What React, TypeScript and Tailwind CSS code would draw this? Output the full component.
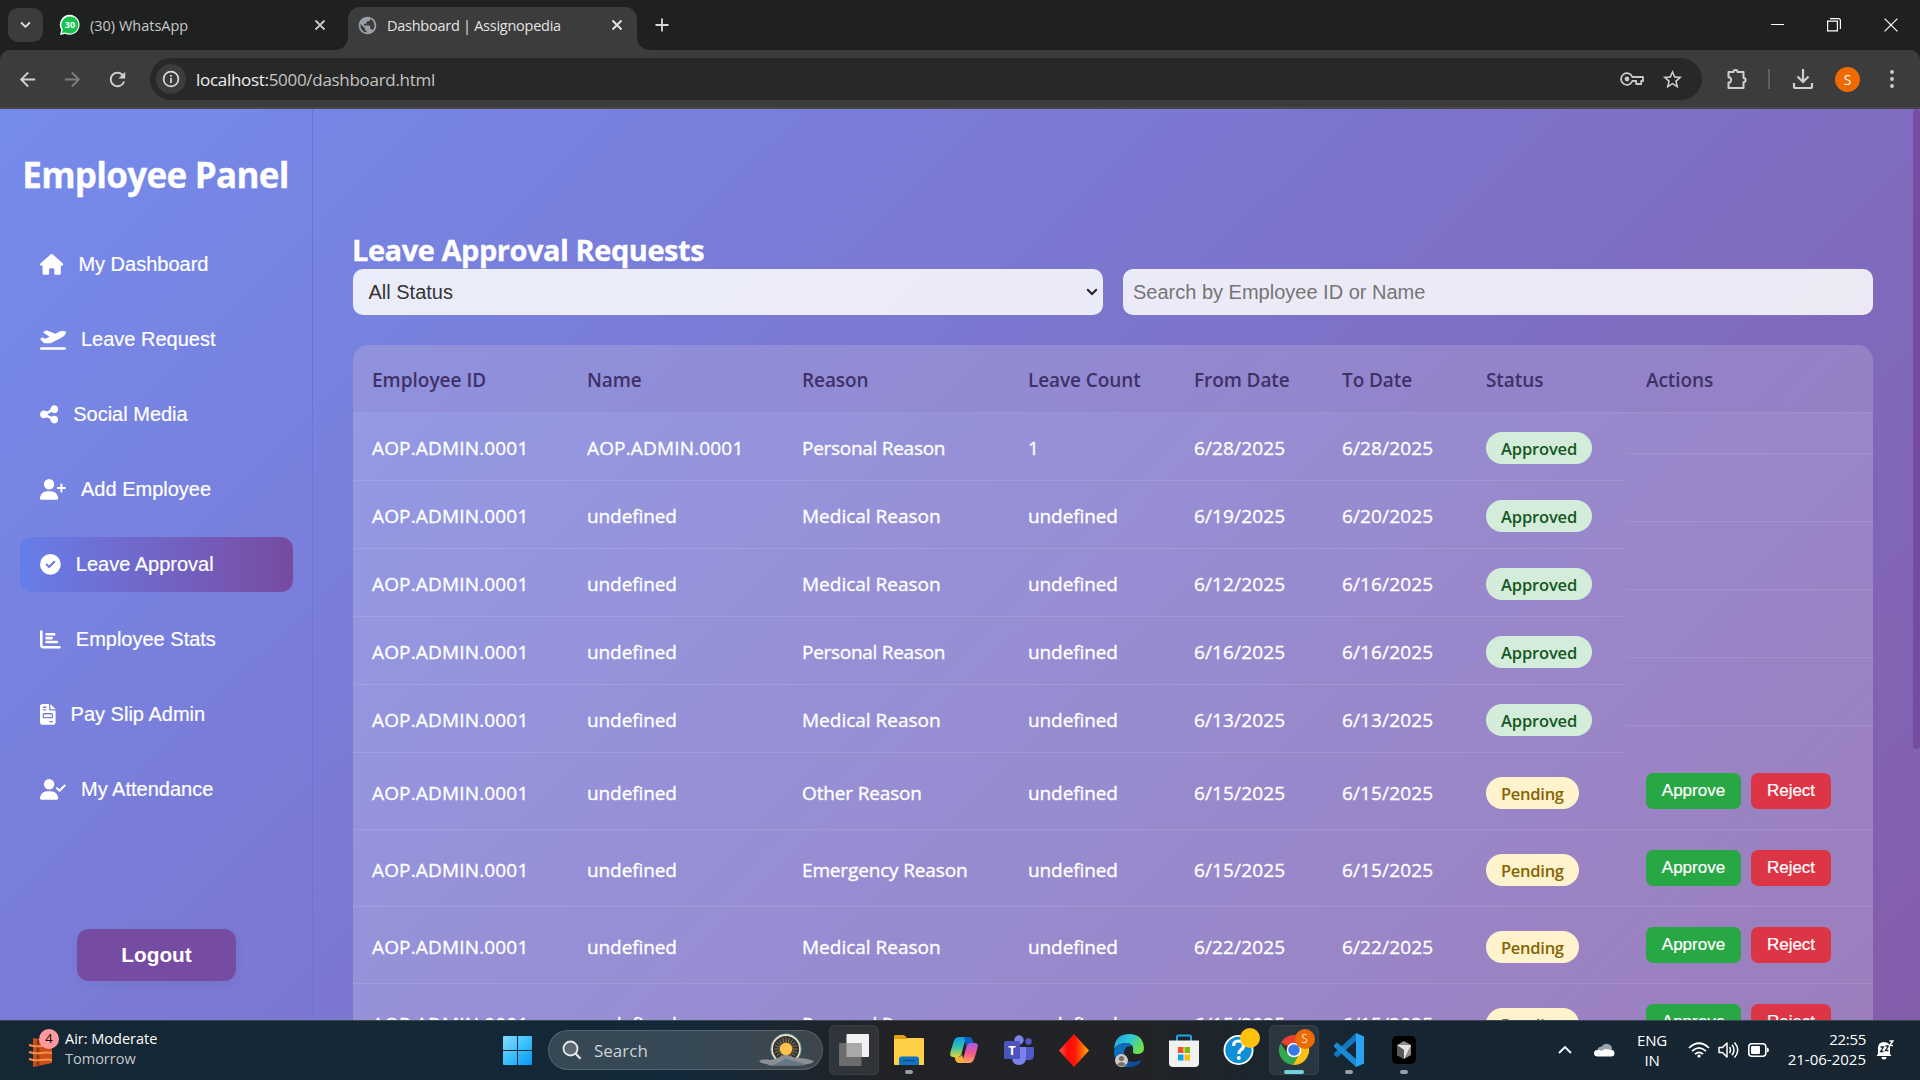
import React from "react";
import {
  FaHouse,
  FaPlaneDeparture,
  FaShareNodes,
  FaUserPlus,
  FaCircleCheck,
  FaChartBar,
  FaFileInvoice,
  FaUserCheck,
} from "react-icons/fa6";
import { MdStarBorder, MdArrowBack, MdArrowForward, MdRefresh, MdPublic } from "react-icons/md";

/* ---------- Browser chrome ---------- */

function CloseX({ bright = false }: { bright?: boolean }) {
  return (
    <svg viewBox="0 0 12 12" className={`size-3 ${bright ? "text-[#e8e8e8]" : "text-[#c8c8c8]"}`}>
      <path d="M1.5 1.5 10.5 10.5M10.5 1.5 1.5 10.5" stroke="currentColor" strokeWidth="1.8" />
    </svg>
  );
}

function WhatsAppBadge() {
  return (
    <svg viewBox="0 0 22 22" className="size-[22px]">
      <path d="M11 .8a10 10 0 1 1-4.8 19L1 21l1.3-5A10 10 0 0 1 11 .8z" fill="#fff" />
      <path d="M11 2.400a8.600 8.600 0 1 1-4.500 16L3 19l.8-3.400A8.600 8.600 0 0 1 11 2.400z" fill="#17c24c" />
      <text x="11" y="14.3" textAnchor="middle" fontSize="9" fontWeight="700" fill="#fff" fontFamily="Open Sans">
        30
      </text>
    </svg>
  );
}

function TabStrip() {
  return (
    <div className="flex h-[50px] shrink-0 items-end bg-[#1f2121]">
      <div className="mb-2 ml-2 flex h-[34px] w-[35px] items-center justify-center rounded-[10px] bg-[#3c3c3c]">
        <svg viewBox="0 0 12 8" className="h-[8px] w-[11px]">
          <path d="M1.2 1.3 6 6l4.8-4.7" stroke="#e3e3e3" strokeWidth="2" fill="none" />
        </svg>
      </div>
      <div className="ml-4 flex h-[50px] w-[289px] items-center">
        <WhatsAppBadge />
        <span className="ml-[9px] grow pt-[1px] text-[14.5px] text-[#c8c8c8]">(30) WhatsApp</span>
        <span className="mr-[22px]">
          <CloseX />
        </span>
      </div>
      <div className="relative flex h-[43px] w-[289px] items-center rounded-t-[12px] bg-[#3c3c3c] pb-[7px] pl-[9px]">
        <span className="absolute bottom-0 -left-3 size-3 bg-[radial-gradient(circle_at_0_0,transparent_11.5px,#3c3c3c_12px)]" />
        <span className="absolute -right-3 bottom-0 size-3 bg-[radial-gradient(circle_at_100%_0,transparent_11.5px,#3c3c3c_12px)]" />
        <span className="flex size-5 items-center justify-center">
          <MdPublic className="size-[21px] shrink-0 text-[#9aa0a6]" />
        </span>
        <span className="ml-[10px] grow pt-[1px] text-[14.5px] tracking-[-0.26px] text-[#e3e3e3]">
          Dashboard | Assignopedia
        </span>
        <span className="mr-[14px]">
          <CloseX bright />
        </span>
      </div>
      <svg viewBox="0 0 14 14" className="mb-[18px] ml-[18px] size-[14px]">
        <path d="M7 .5v13M.5 7h13" stroke="#d8d8d8" strokeWidth="1.8" />
      </svg>
      <div className="ml-auto flex h-[50px] items-center pr-[22px]">
        <div className="mb-[2px] h-px w-[13px] bg-white" />
        <svg viewBox="0 0 14 14" className="ml-[43px] size-[14px]">
          <path d="M.6 3.100h9.800v9.800H.6z" stroke="#fff" strokeWidth="1.2" fill="none" />
          <path d="M3 .7h8.400q2 0 2 2V11" stroke="#fff" strokeWidth="1.2" fill="none" />
        </svg>
        <svg viewBox="0 0 14 14" className="ml-[43px] size-[14px]">
          <path d="M.6.6l12.8 12.8M13.4.6.6 13.4" stroke="#fff" strokeWidth="1.2" />
        </svg>
      </div>
    </div>
  );
}

function Toolbar() {
  return (
    <div className="shrink-0 bg-[#1f2121]">
      <div className="flex h-[59px] items-center rounded-t-[10px] border-b-2 border-[#474747] bg-[#3c3c3c] pt-[1px] text-[#d0d0d0]">
        <MdArrowBack className="ml-[16px] size-[23px]" />
        <MdArrowForward className="ml-[22px] size-[23px] text-[#7c7c7c]" />
        <MdRefresh className="ml-[22px] size-[23px]" />
        <div className="ml-[21px] flex h-[42px] w-[1552px] items-center rounded-full bg-[#282828] pl-[6px]">
          <div className="flex size-[30px] items-center justify-center rounded-full bg-[#3c3c3c]">
            <svg viewBox="0 0 18 18" className="size-[18px]">
              <circle cx="9" cy="9" r="7.4" fill="none" stroke="#dcdcdc" strokeWidth="1.7" />
              <path d="M9 8v5M9 5v1.8" stroke="#dcdcdc" strokeWidth="1.7" />
            </svg>
          </div>
          <span className="ml-[10px] grow pt-[1px] text-[17px] tracking-[-0.3px] text-[#c4c4c4]">
            <span className="text-[#f0f0f0]">localhost:</span>5000/dashboard.html
          </span>
          <svg viewBox="0 0 24 14" className="h-[14px] w-[24px]" fill="none" stroke="#c8c8c8" strokeWidth="1.8">
            <path d="M12.3 5a5.800 5.800 0 1 0 0 4h3.900v3h5v-3H23V5z" strokeLinejoin="round" />
            <circle cx="7" cy="7" r="2.4" fill="#c8c8c8" stroke="none" />
          </svg>
          <MdStarBorder className="mr-[18px] ml-[17px] size-[23px]" />
        </div>
        <svg viewBox="0 0 22 22" className="ml-[24px] size-[22px]" fill="none" stroke="#d0d0d0" strokeWidth="2">
          <path
            d="M2.5 4h5a2 2 0 0 1 4 0h6v6a2 2 0 0 1 0 4.200V20h-15v-5.500a2.600 2.600 0 0 0 0-5.200z"
            strokeLinejoin="round"
          />
        </svg>
        <div className="ml-[20px] h-[20px] w-[2px] bg-[#606060]" />
        <svg viewBox="0 0 22 22" className="ml-[22px] size-[22px]" fill="none" stroke="#d0d0d0" strokeWidth="2.2">
          <path d="M11 1v12M5.500 8.500 11 14l5.500-5.500M2 15v3.500q0 1.500 1.500 1.500h15q1.500 0 1.500-1.500V15" />
        </svg>
        <div className="ml-[21px] flex size-[25px] items-center justify-center rounded-full bg-[#f06a00] text-[14px] text-white">
          S
        </div>
        <svg viewBox="0 0 4 18" className="ml-[30px] h-[18px] w-[4px] fill-[#d0d0d0]">
          <circle cx="2" cy="2" r="1.9" />
          <circle cx="2" cy="9" r="1.9" />
          <circle cx="2" cy="16" r="1.9" />
        </svg>
      </div>
    </div>
  );
}

/* ---------- Sidebar ---------- */

const MENU = [
  { label: "My Dashboard", icon: FaHouse, size: "w-[23.4px]" },
  { label: "Leave Request", icon: FaPlaneDeparture, size: "w-[26px]" },
  { label: "Social Media", icon: FaShareNodes, size: "w-[18.2px]" },
  { label: "Add Employee", icon: FaUserPlus, size: "w-[26px]" },
  { label: "Leave Approval", icon: FaCircleCheck, size: "w-[20.8px]", active: true },
  { label: "Employee Stats", icon: FaChartBar, size: "w-[20.8px]" },
  { label: "Pay Slip Admin", icon: FaFileInvoice, size: "w-[15.6px]" },
  { label: "My Attendance", icon: FaUserCheck, size: "w-[26px]" },
];

function Sidebar() {
  return (
    <aside className="flex w-[313px] shrink-0 flex-col border-r border-[#6c73da] pr-[19px] pl-5">
      <h1 className="mt-[42px] -ml-[2px] text-center text-[35px] leading-[48px] font-bold tracking-[-0.7px] whitespace-nowrap text-white [-webkit-text-stroke:0.3px_white]">
        Employee Panel
      </h1>
      <nav className="mt-[38px] flex flex-col gap-5 font-['Liberation_Sans',sans-serif] text-[20px] text-white [-webkit-text-stroke:0.2px_white]">
        {MENU.map(({ label, icon: Icon, size, active }) => (
          <div
            key={label}
            className={`flex h-[55px] items-center gap-[15px] rounded-[12px] px-5 ${
              active ? "bg-linear-to-r from-[#667eea] to-[#764ba2]" : ""
            }`}
          >
            <Icon className={`h-[20.8px] shrink-0 ${size}`} />
            <span className="pb-[2px]">{label}</span>
          </div>
        ))}
      </nav>
      <div className="mt-[112px] flex h-[52px] w-[159px] shrink-0 items-center justify-center self-center rounded-[12px] bg-[#764ba2] font-['Liberation_Sans',sans-serif] text-[20.8px] font-bold text-white shadow-[0_3px_12px_rgba(0,0,0,0.06)]">
        Logout
      </div>
    </aside>
  );
}

/* ---------- Leave table ---------- */

const ID = "AOP.ADMIN.0001";
const UNDEF = "undefined";
const HEADERS = ["Employee ID", "Name", "Reason", "Leave Count", "From Date", "To Date", "Status", "Actions"];
const ROWS = [
  { cells: [ID, ID, "Personal Reason", "1", "6/28/2025", "6/28/2025"], approved: true },
  { cells: [ID, UNDEF, "Medical Reason", UNDEF, "6/19/2025", "6/20/2025"], approved: true },
  { cells: [ID, UNDEF, "Medical Reason", UNDEF, "6/12/2025", "6/16/2025"], approved: true },
  { cells: [ID, UNDEF, "Personal Reason", UNDEF, "6/16/2025", "6/16/2025"], approved: true },
  { cells: [ID, UNDEF, "Medical Reason", UNDEF, "6/13/2025", "6/13/2025"], approved: true },
  { cells: [ID, UNDEF, "Other Reason", UNDEF, "6/15/2025", "6/15/2025"], approved: false },
  { cells: [ID, UNDEF, "Emergency Reason", UNDEF, "6/15/2025", "6/15/2025"], approved: false },
  { cells: [ID, UNDEF, "Medical Reason", UNDEF, "6/22/2025", "6/22/2025"], approved: false },
  { cells: [ID, UNDEF, "Personal Reason", UNDEF, "6/15/2025", "6/15/2025"], approved: false },
];

function tracking(text: string) {
  if (text === ID) return "tracking-[0.16px]";
  if (text === "Personal Reason") return "tracking-[-0.28px]";
  if (text === "Medical Reason") return "tracking-[0px]";
  if (text.endsWith("Reason")) return "tracking-[-0.15px]";
  if (text === UNDEF) return "tracking-[-0.1px]";
  return "tracking-[0.13px]";
}

const GRID = "grid grid-cols-[214px_215px_226px_166px_148px_144px_160px_247px]";
const CELL = "flex items-center border-b border-white/10 pl-5";

function LeaveTable() {
  return (
    <div className="mt-[30px] overflow-hidden rounded-t-[15px] bg-white/20 text-[19px] whitespace-nowrap text-white">
      <div className={`${GRID} h-[68px] bg-[#764ba2]/10 font-semibold tracking-[-0.08px] text-[#3f3168]`}>
        {HEADERS.map((h, i) => (
          <div key={h} className={`${CELL} pt-[4px]`}>
            <span className={i === 0 ? "-ml-px tracking-[0px]" : ""}>{h}</span>
          </div>
        ))}
      </div>
      {ROWS.map((row, i) => (
        <div key={i} className={`${GRID} ${row.approved ? "h-[68px]" : "h-[77px]"}`}>
          {row.cells.map((c, j) => (
            <div
              key={j}
              className={`${CELL} [-webkit-text-stroke:0.35px_white] ${row.approved ? "pt-[3px]" : "pt-[5px]"}`}
            >
              <span className={`${j === 0 ? "-ml-px" : ""} ${tracking(c)}`}>{c}</span>
            </div>
          ))}
          <div className={CELL}>
            <span
              className={`flex h-[32px] items-center rounded-[16px] px-[15px] pt-[3px] text-[16.5px] font-semibold ${
                row.approved
                  ? "mt-[2px] bg-[#d4edda] tracking-[-0.15px] text-[#155724]"
                  : "mt-[3px] bg-[#fff3cd] tracking-[-0.27px] text-[#856404]"
              }`}
            >
              {row.approved ? "Approved" : "Pending"}
            </span>
          </div>
          {row.approved ? (
            <div className="h-[41px] border-b border-white/10" />
          ) : (
            <div className={`${CELL} gap-[10px] font-['Liberation_Sans',sans-serif] text-[17px] [-webkit-text-stroke:0.2px_white]`}>
              <span className="flex h-[36px] w-[95px] items-center justify-center rounded-[7px] bg-[#28a745] pb-[1px]">
                Approve
              </span>
              <span className="flex h-[36px] w-[80px] items-center justify-center rounded-[7px] bg-[#dc3545] pb-[1px]">
                Reject
              </span>
            </div>
          )}
        </div>
      ))}
    </div>
  );
}

function Content() {
  return (
    <main className="flex min-w-0 grow items-start">
      <div className="ml-[40px] w-[1520px] shrink-0 pt-[120px]">
        <h2 className="-ml-px h-[40px] text-[29px] leading-[42px] font-bold tracking-[-0.46px] text-white [-webkit-text-stroke:0.3px_white]">
          Leave Approval Requests
        </h2>
        <div className="flex gap-5 font-['Liberation_Sans',sans-serif] text-[20px]">
          <div className="flex h-[46px] w-[750px] items-center justify-between rounded-[10px] border border-white/20 bg-white/85 pr-[4px] pl-[14.5px] text-[#333]">
            All Status
            <svg viewBox="0 0 12 8" className="h-[8px] w-[12px]">
              <path d="M1.2 1.3 6 6l4.8-4.7" stroke="#222" strokeWidth="2" fill="none" />
            </svg>
          </div>
          <div className="flex h-[46px] w-[750px] items-center rounded-[10px] border border-white/20 bg-white/85 pl-[9px] text-[#757575]">
            Search by Employee ID or Name
          </div>
        </div>
        <LeaveTable />
      </div>
      <div className="ml-auto h-[640px] w-[7px] rounded-[4px] bg-[#764ba2]" />
    </main>
  );
}

/* ---------- Taskbar ---------- */

function WeatherIcon() {
  return (
    <div className="relative h-[38px] w-[32px]">
      <svg viewBox="0 0 32 38" className="h-[38px] w-[32px]">
        <path d="M5 7 24 10v22L5 36z" fill="#c94f18" />
        <path d="M10 9v25" stroke="#8c3410" strokeWidth="2.5" />
        <path d="M1 14q6 2 12 1t10 0M1 21q6 2 12 1t11 0M1 28q6 2 12 1t11 0" stroke="#f58f4d" strokeWidth="2" fill="none" />
      </svg>
      <span className="absolute -top-[2px] left-[11px] flex size-[20px] items-center justify-center rounded-full bg-[#ff99a0] text-[13px] text-black">
        4
      </span>
    </div>
  );
}

function WindowsLogo() {
  return (
    <svg viewBox="0 0 29 29" className="size-[29px]">
      <defs>
        <linearGradient id="win" x1="0" y1="0" x2="1" y2="1">
          <stop offset="0" stopColor="#84dcff" />
          <stop offset=".5" stopColor="#3cc0fb" />
          <stop offset="1" stopColor="#0a94f6" />
        </linearGradient>
      </defs>
      <path d="M1 0h13v14H0V1q0-1 1-1zM15 0h13q1 0 1 1v13H15zM0 15h14v14H1q-1 0-1-1zM15 15h14v13q0 1-1 1H15z" fill="url(#win)" />
    </svg>
  );
}

const RAYS = Array.from({ length: 20 }, (_, i) => (i * Math.PI) / 10);

function SunIcon() {
  return (
    <svg viewBox="0 0 56 34" className="h-[34px] w-[56px]">
      <circle cx="28" cy="16" r="14" fill="#2b3440" stroke="#f6e3b5" strokeWidth="1.8" />
      <circle cx="28" cy="16" r="15.2" fill="none" stroke="#6fb0e0" strokeWidth=".7" />
      {RAYS.map((a) => (
        <line
          key={a}
          x1={28 + 6 * Math.cos(a)}
          y1={16 + 6 * Math.sin(a)}
          x2={28 + 11.5 * Math.cos(a)}
          y2={16 + 11.5 * Math.sin(a)}
          stroke="#c8972e"
          strokeWidth=".7"
        />
      ))}
      <circle cx="28" cy="16" r="6.2" fill="#ffc24a" />
      <path d="M1 28q5-3 11-1 6-1 10-3 5-4 10-1 4 2 9 2 8 0 15 3-2 3-7 3-3 1.500-8 1.500H14Q10 32.500 9 31 3 31 1 28z" fill="#8c8f93" />
      <path d="M14 32.500q8-3 14-7 6 2 12 3.500 5 1 8 3H14z" fill="#62798a" />
    </svg>
  );
}

function TaskbarItem({ children, mark, box }: { children: React.ReactNode; mark?: "idle" | "active"; box?: boolean }) {
  return (
    <div className="flex w-[55px] justify-center">
      <div
        className={`relative flex h-[50px] w-[50px] items-center justify-center rounded-[6px] ${
          box ? "border border-white/5 bg-white/8" : ""
        }`}
      >
        {children}
        {mark === "idle" && <span className="absolute bottom-[1px] h-[4px] w-[8px] rounded-full bg-[#9a9da1]" />}
        {mark === "active" && <span className="absolute bottom-0 h-[4px] w-[20px] rounded-full bg-[#6fd3d8]" />}
      </div>
    </div>
  );
}

function TaskViewIcon() {
  return (
    <svg viewBox="0 0 30 32" className="h-[32px] w-[30px]">
      <rect x="7.500" y="0" width="22.500" height="23" rx="1" fill="#f2f2f2" />
      <rect x="0" y="9" width="22.500" height="23" rx="1" fill="#6c6c6c" />
      <path d="M7.500 9h15v14h-15z" fill="#a9a9a9" />
    </svg>
  );
}

function FolderIcon() {
  return (
    <svg viewBox="0 0 30 32" className="h-[32px] w-[30px]">
      <path d="M0 2q0-1 1-1h9l4 4h-4v5H0z" fill="#e0a010" />
      <path d="M0 6q0-1 1-1h11l2-1h15q1 0 1 1v26H1q-1 0-1-1z" fill="#ffcf48" />
      <path d="M5 31v-6q0-2.500 2.500-2.500h15Q25 22.500 25 25v6z" fill="#0f74c4" />
      <path d="M9 26.500h12" stroke="#094c86" strokeWidth="1.500" />
    </svg>
  );
}

function CopilotIcon() {
  return (
    <svg viewBox="0 0 30 30" className="size-[30px]">
      <defs>
        <linearGradient id="cpA" x1="0" y1="0" x2="0" y2="1">
          <stop offset="0" stopColor="#1896e8" />
          <stop offset=".5" stopColor="#2fc2b0" />
          <stop offset="1" stopColor="#e8d13a" />
        </linearGradient>
        <linearGradient id="cpB" x1="0" y1="0" x2="0" y2="1">
          <stop offset="0" stopColor="#a35be8" />
          <stop offset=".5" stopColor="#f0568e" />
          <stop offset="1" stopColor="#ffa45c" />
        </linearGradient>
      </defs>
      <path d="M19 2h-9Q6 2 4.500 7L1.500 17q-1.500 5 3 5h4q3 0 4-3.500l3-11Q16.500 4 19 2z" fill="url(#cpA)" />
      <path d="M15 2h5q3 0 4 4l.7 2.500H21q-3 0-4 3z" fill="#0c5fc0" />
      <path d="M11 28h9q4 0 5.500-5l3-10q1.500-5-3-5h-4q-3 0-4 3.500l-3 11Q13.500 26 11 28z" fill="url(#cpB)" />
      <path d="M15 28h-5q-3 0-4-4l-.5-2h4q2.500 0 3.500-3z" fill="#f4b13c" />
    </svg>
  );
}

function TeamsIcon() {
  return (
    <svg viewBox="0 0 30 30" className="size-[30px]">
      <circle cx="24.500" cy="6.500" r="3.200" fill="#5059c9" />
      <path d="M20 12h9q1 0 1 1v7q0 5-5 5h-5z" fill="#5059c9" />
      <circle cx="15" cy="5" r="4.700" fill="#7b83eb" />
      <path d="M8 12h14v10q0 8-7 8t-7-8z" fill="#7b83eb" />
      <rect x="0" y="6" width="16" height="18" rx="1.500" fill="#4b53bc" />
      <text x="8" y="19.500" textAnchor="middle" fontSize="13" fontWeight="700" fill="#fff" fontFamily="Open Sans">
        T
      </text>
    </svg>
  );
}

function DiamondIcon() {
  return (
    <svg viewBox="0 0 30 33" className="h-[33px] w-[30px]">
      <defs>
        <linearGradient id="dia" x1="0" x2="1">
          <stop offset="0" stopColor="#ff5040" />
          <stop offset=".3" stopColor="#ff0a0a" />
          <stop offset=".55" stopColor="#ff1a05" />
          <stop offset="1" stopColor="#ffb000" />
        </linearGradient>
      </defs>
      <path d="M15 0 30 16.500 15 33 0 16.500z" fill="url(#dia)" />
    </svg>
  );
}

function EdgeIcon() {
  return (
    <svg viewBox="0 0 30 33" className="h-[33px] w-[30px]">
      <defs>
        <linearGradient id="edA" x1="0" y1="0" x2="1" y2=".5">
          <stop offset="0" stopColor="#1b9de2" />
          <stop offset=".5" stopColor="#2fc6d8" />
          <stop offset="1" stopColor="#6be04a" />
        </linearGradient>
      </defs>
      <path d="M0 15Q1 0 15 0t15 14q0 6-7 6-5 0-4-3 1-8-7-8Q4 9 0 15z" fill="url(#edA)" />
      <path d="M0 16Q4 9 12 9q4 0 6 3-7-1-8 6-1 8 6 11 7 3 11-3-4 7-12 7Q0 33 0 16z" fill="#0f6cbd" />
      <path d="M10 18q0 9 8 10 6 .5 10-3-3 8-13 8Q8 31 10 18z" fill="#0b4f9c" />
      <circle cx="7.500" cy="26.500" r="6.500" fill="#cfcac5" />
      <circle cx="7.500" cy="24.500" r="2.600" fill="#77706a" />
      <path d="M3 30.500q4.500-5 9 0-4.500 3.500-9 0z" fill="#77706a" />
    </svg>
  );
}

function StoreIcon() {
  return (
    <svg viewBox="0 0 30 33" className="h-[33px] w-[30px]">
      <path d="M8 8V2.500Q8 1.500 9.500 1.500h11Q22 1.500 22 2.500V8" fill="none" stroke="#1fa8ec" strokeWidth="2" />
      <path d="M0 6.500h30V29q0 4-4 4H4q-4 0-4-4z" fill="#f1f1f1" />
      <path d="M9 13h5.500v6H9z" fill="#f25022" />
      <path d="M15.500 13H21v6h-5.500z" fill="#7fba00" />
      <path d="M9 20.500h5.500v6H9z" fill="#00a4ef" />
      <path d="M15.500 20.500H21v6h-5.500z" fill="#ffb900" />
    </svg>
  );
}

function HelpIcon() {
  return (
    <div className="relative size-[32px]">
      <svg viewBox="0 0 32 32" className="size-[32px]">
        <circle cx="15.500" cy="16" r="15" fill="#fff" />
        <circle cx="15.500" cy="16" r="13.200" fill="#0f8fd6" />
        <path d="M10.500 12q0-5 5-5t5 4.500q0 2.800-2.700 4.500-2 1.300-2 4" stroke="#fff" strokeWidth="3.200" fill="none" />
        <circle cx="15.800" cy="24" r="2" fill="#fff" />
      </svg>
      <span className="absolute -top-[6px] left-[17px] size-[20px] rounded-full bg-[#ffc20e]" />
    </div>
  );
}

function ChromeIcon() {
  return (
    <div className="relative size-[32px]">
      <svg viewBox="0 0 32 32" className="size-[32px]">
        <path d="M16 16 3 8.500A15 15 0 0 1 29 8.500H16z" fill="#e94235" />
        <path d="M2.500 9.200A15 15 0 0 0 15 31l6.500-11.500L16 16 9.500 19.500z" fill="#32a650" />
        <path d="M29.200 8.800A15 15 0 0 1 15 31l6.500-11.500V16L18 8.800z" fill="#fbc116" />
        <circle cx="16" cy="16" r="7.300" fill="#fff" />
        <circle cx="16" cy="16" r="5.800" fill="#3b78e7" />
      </svg>
      <span className="absolute -top-[5px] left-[17px] flex size-[20px] items-center justify-center rounded-full bg-[#ea6a05] text-[12px] text-[#ffd9b0]">
        S
      </span>
    </div>
  );
}

function CodeIcon() {
  return (
    <svg viewBox="0 0 30 34" className="h-[34px] w-[30px]">
      <path d="M22 8 3 24.500 0 22q-.5-1 0-1.700L22 0z" fill="#1277bd" />
      <path d="M22 26 3 9.500 0 12q-.5 1 0 1.700L22 34z" fill="#1a8ad6" />
      <path d="M22 0l8 3.500v27L22 34z" fill="#2aa4f2" />
    </svg>
  );
}

function CubeIcon() {
  return (
    <svg viewBox="0 0 24 28" className="h-[28px] w-[24px]">
      <rect width="24" height="28" rx="5" fill="#000" />
      <path d="M12 5 19 9v10L12 23 5 19V9z" fill="#8b8b8b" />
      <path d="M5 9h14L12 23V14z" fill="#e4e4e4" />
      <path d="M5 9 12 14v9L5 19z" fill="#5a5a5a" />
    </svg>
  );
}

function Taskbar() {
  return (
    <footer className="flex h-[60px] shrink-0 items-center border-t border-[#3e4a52] bg-[linear-gradient(90deg,#152733_0%,#132838_36%,#1b2630_41%,#212226_46%,#212327_60%,#162733_70%,#152632_82%,#172530_100%)] pb-[1px] text-[15px] text-white">
      <div className="ml-[28px] flex w-[475px] items-center gap-[5px]">
        <WeatherIcon />
        <div className="pb-[2px] text-[14.5px] leading-[20px]">
          <div>Air: Moderate</div>
          <div className="text-[#c3c9cd]">Tomorrow</div>
        </div>
      </div>
      <WindowsLogo />
      <div className="ml-[16px] flex h-[40px] w-[275px] items-center rounded-full border border-white/15 bg-white/15 pl-[13px]">
        <svg viewBox="0 0 20 20" className="size-[20px]">
          <circle cx="8.500" cy="8.500" r="7" fill="#5c6770" stroke="#e6e8ea" strokeWidth="1.800" />
          <path d="M13.500 13.500 18.500 18.800" stroke="#e6e8ea" strokeWidth="2.200" />
        </svg>
        <span className="ml-[12px] grow pt-[1px] text-[17px] text-[#ced3d7]">Search</span>
        <span className="mr-[8px]">
          <SunIcon />
        </span>
      </div>
      <div className="ml-[3px] flex">
        <TaskbarItem box>
          <TaskViewIcon />
        </TaskbarItem>
        <TaskbarItem mark="idle">
          <FolderIcon />
        </TaskbarItem>
        <TaskbarItem>
          <CopilotIcon />
        </TaskbarItem>
        <TaskbarItem>
          <TeamsIcon />
        </TaskbarItem>
        <TaskbarItem>
          <DiamondIcon />
        </TaskbarItem>
        <TaskbarItem>
          <EdgeIcon />
        </TaskbarItem>
        <TaskbarItem>
          <StoreIcon />
        </TaskbarItem>
        <TaskbarItem>
          <HelpIcon />
        </TaskbarItem>
        <TaskbarItem box mark="active">
          <ChromeIcon />
        </TaskbarItem>
        <TaskbarItem mark="idle">
          <CodeIcon />
        </TaskbarItem>
        <TaskbarItem mark="idle">
          <CubeIcon />
        </TaskbarItem>
      </div>
      <div className="ml-auto flex items-center pr-[26px]">
        <svg viewBox="0 0 14 8" className="h-[8px] w-[14px]">
          <path d="M1 7 7 1l6 6" stroke="#fff" strokeWidth="1.800" fill="none" />
        </svg>
        <svg viewBox="0 0 21 14" className="ml-[22px] h-[14px] w-[21px]">
          <path d="M3 9Q3 4 7.500 3.500 10 0 14 1t4 5l-8 4z" fill="#9ba4aa" />
          <path d="M4 13.500q-4 0-4-3.300T4 7q2 0 3.500 1 3-3 7-1.500 6-.5 6 3.700 0 3.300-3.500 3.300z" fill="#fff" />
        </svg>
        <div className="ml-[21px] w-[32px] pb-[1px] text-center leading-[20px] tracking-[-0.2px]">
          ENG
          <br />
          IN
        </div>
        <svg viewBox="0 0 22 16" className="ml-[20px] h-[16px] w-[22px]" fill="none" stroke="#fff" strokeWidth="1.700">
          <path d="M1 6Q11-3.500 21 6M4 9.200q7-6.700 14 0M7 12.200q4-3.800 8 0" />
          <circle cx="11" cy="14" r="1.600" fill="#fff" stroke="none" />
        </svg>
        <svg viewBox="0 0 21 18" className="ml-[8px] h-[18px] w-[21px]" fill="none" stroke="#fff" strokeWidth="1.500">
          <path d="M1 6.500h3.500L9 2v14l-4.500-4.500H1z" strokeLinejoin="round" />
          <path d="M11.500 6q2 3 0 6M14 3.800q4 5.200 0 10.400M16.500 1.500q6.500 7.500 0 15" />
        </svg>
        <svg viewBox="0 0 21 14" className="ml-[9px] h-[14px] w-[21px]">
          <rect x=".8" y=".8" width="17" height="12.400" rx="3" fill="none" stroke="#fff" strokeWidth="1.600" />
          <rect x="3" y="3" width="9" height="8" rx="1" fill="#fff" />
          <path d="M19 4.500q2 .5 2 2.500t-2 2.500z" fill="#fff" />
        </svg>
        <div className="ml-[17px] flex w-[80px] flex-col items-end pb-[2px] leading-[20px] whitespace-nowrap">
          <span className="tracking-[-0.3px]">22:55</span>
          <span>21-06-2025</span>
        </div>
        <svg viewBox="0 0 18 20" className="ml-[10px] h-[20px] w-[18px]">
          <path d="M2 14V8q0-6 6-6 6 0 6 6v6l1.500 2H.5z" fill="#fff" />
          <path d="M5.500 17h5q0 2.500-2.500 2.500T5.500 17z" fill="#fff" />
          <path d="M4.500 7h3L4.500 11.500h3M9.500 6h3l-3 4.500h3" stroke="#152632" strokeWidth="1.300" fill="none" />
          <path d="M13.500 1h3.500l-3.500 4.500H17" stroke="#fff" strokeWidth="1.400" fill="none" />
        </svg>
      </div>
    </footer>
  );
}

export default function App() {
  return (
    <div className="flex h-[1080px] w-[1920px] flex-col overflow-hidden font-['Open_Sans','Noto_Sans',sans-serif]">
      <TabStrip />
      <Toolbar />
      <div className="flex min-h-0 flex-1 overflow-hidden bg-[linear-gradient(135deg,#758bec,#845dab)]">
        <Sidebar />
        <Content />
      </div>
      <Taskbar />
    </div>
  );
}
